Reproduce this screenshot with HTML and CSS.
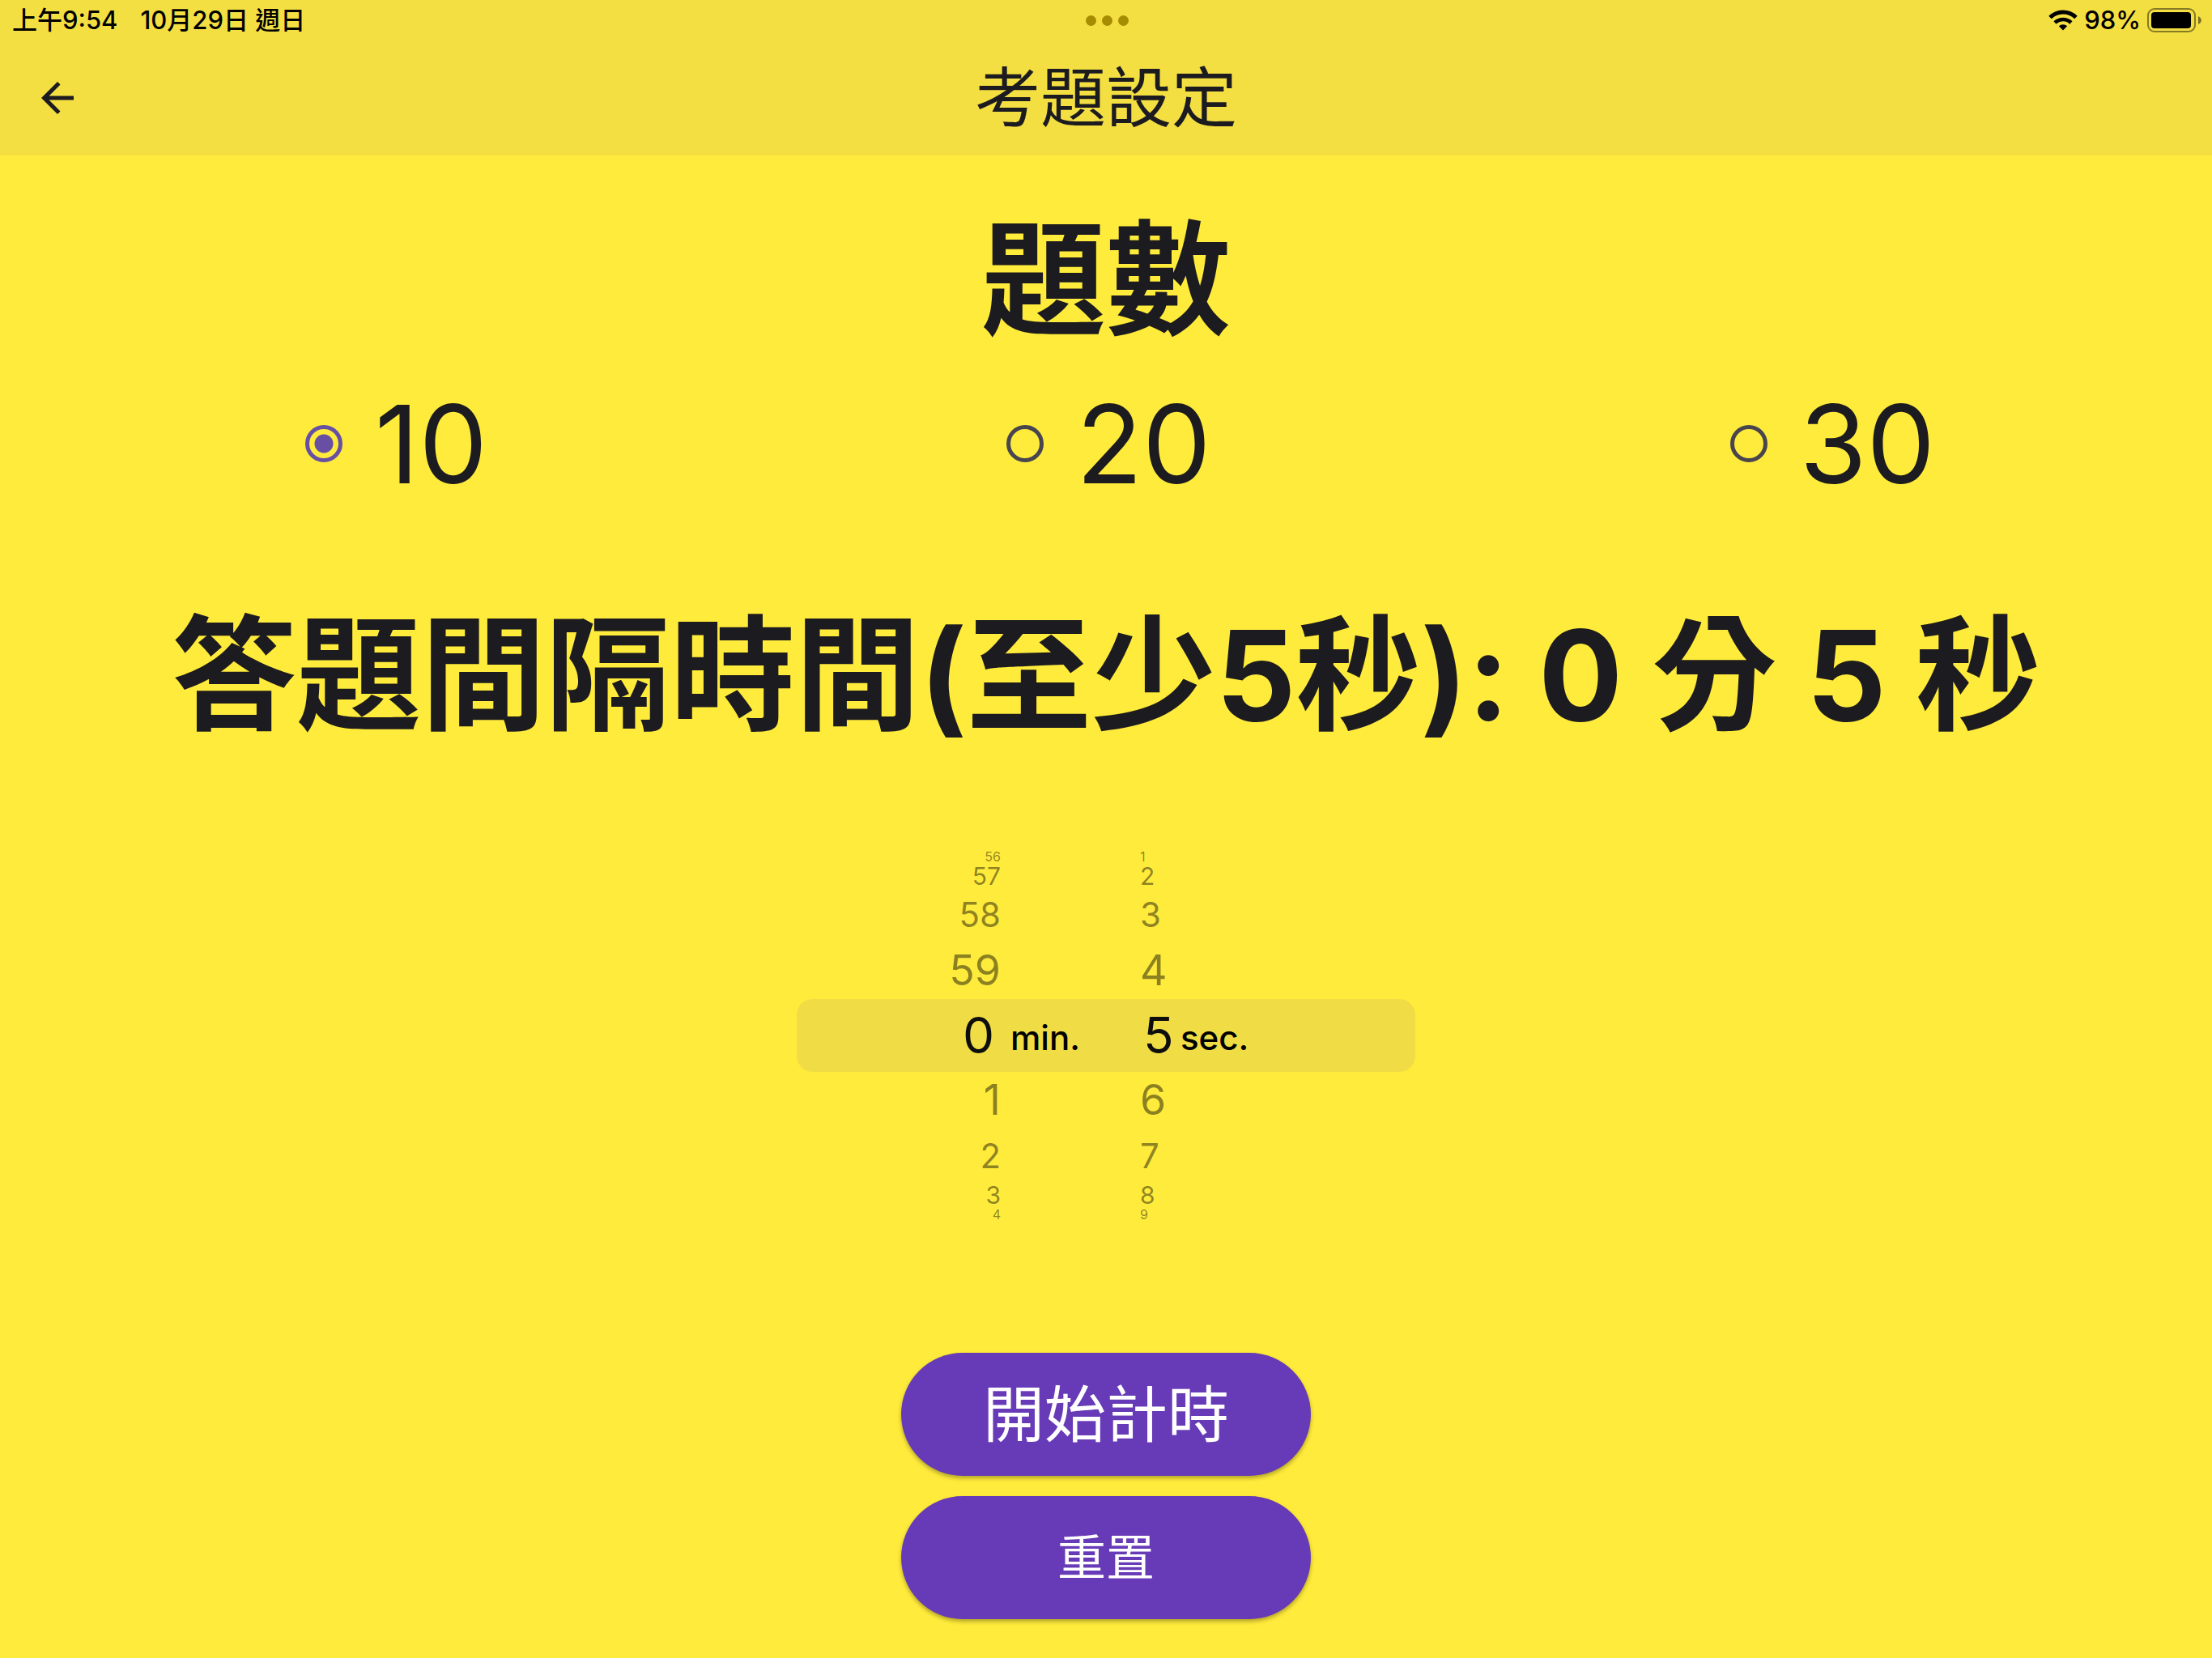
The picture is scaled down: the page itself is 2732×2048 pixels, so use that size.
FILE: index.html
```html
<!DOCTYPE html>
<html lang="zh-Hant">
<head>
  <meta charset="utf-8">
  <meta name="viewport" content="width=device-width, initial-scale=1">
  <title>考題設定</title>
  <link rel="stylesheet" href="styles.css">
</head>
<body>
  <header class="header">
    <div class="status">
      <div class="status-left">
        <span>上午9:54</span>
        <span>10月29日 週日</span>
      </div>
      <div class="dots"><i class="dot"></i><i class="dot"></i><i class="dot"></i></div>
      <div class="status-right">
        <svg class="wifi" viewBox="0 0 36 26" aria-hidden="true">
          <path d="M2 9.5a23 23 0 0 1 32 0" fill="none" stroke="#000" stroke-width="5"/>
          <path d="M8 16a14.5 14.5 0 0 1 20 0" fill="none" stroke="#000" stroke-width="4.6"/>
          <path d="M12.8 20.3a7.6 7.6 0 0 1 10.4 0L18 25.5z"/>
        </svg>
        <span>98%</span>
        <svg class="battery" viewBox="0 0 68 30" aria-hidden="true">
          <rect x="1" y="1" width="58" height="28" rx="8" fill="none" stroke="#000" stroke-opacity=".45" stroke-width="2"/>
          <rect x="5" y="5" width="49" height="20" rx="4"/>
          <path d="M63 10c5 2 5 8 0 10z" fill-opacity=".5"/>
        </svg>
      </div>
    </div>
    <nav class="bar">
      <button class="back" type="button" aria-label="返回">
        <svg class="back-icon" viewBox="0 0 24 24" aria-hidden="true"><path d="M20 11H7.83l5.59-5.59L12 4l-8 8 8 8 1.41-1.41L7.83 13H20z"/></svg>
      </button>
      <h1 class="title">考題設定</h1>
    </nav>
  </header>

  <main class="main">
    <h2 class="heading" id="count-heading">題數</h2>
    <div class="choices" role="radiogroup" aria-labelledby="count-heading">
      <label class="choice"><input class="radio" type="radio" name="count" value="10" checked>10</label>
      <label class="choice"><input class="radio" type="radio" name="count" value="20">20</label>
      <label class="choice"><input class="radio" type="radio" name="count" value="30">30</label>
    </div>

    <h2 class="heading interval">答題間隔時間(至少5秒): 0 分 5 秒</h2>

    <div class="picker">
      <div class="row edge"><span class="minute">56</span><span class="second">1</span></div>
      <div class="row far"><span class="minute">57</span><span class="second">2</span></div>
      <div class="row mid"><span class="minute">58</span><span class="second">3</span></div>
      <div class="row near"><span class="minute">59</span><span class="second">4</span></div>
      <div class="row selected"><span class="minute">0</span><span class="unit">min.</span><span class="second">5</span><span class="unit">sec.</span></div>
      <div class="row near"><span class="minute">1</span><span class="second">6</span></div>
      <div class="row mid"><span class="minute">2</span><span class="second">7</span></div>
      <div class="row far"><span class="minute">3</span><span class="second">8</span></div>
      <div class="row edge"><span class="minute">4</span><span class="second">9</span></div>
    </div>

    <div class="actions">
      <button class="button" type="button">開始計時</button>
      <button class="button small" type="button">重置</button>
    </div>
  </main>
</body>
</html>
```
FILE: styles.css
```css
* {
  box-sizing: border-box;
}

body {
  margin: 0;
  min-height: 100vh;
  background: #ffeb3b;
  color: #1c1b1f;
  font-family: Inter, "Noto Sans CJK TC", sans-serif;
}

.header {
  background: #f4df43;
}

.status {
  display: grid;
  grid-template-columns: 1fr auto 1fr;
  align-items: center;
  height: 50px;
  padding: 0 12px 0 15px;
  color: #000;
  font-size: 31px;
  font-weight: 500;
  line-height: 50px;
}

.status-left {
  display: flex;
  gap: 28px;
}

.dots {
  display: flex;
  gap: 7px;
}

.dot {
  width: 13px;
  height: 13px;
  border-radius: 50%;
  background: #a68c00;
}

.status-right {
  display: flex;
  align-items: center;
  justify-content: flex-end;
  gap: 8px;
}

.wifi {
  width: 36px;
  height: 26px;
}

.battery {
  width: 68px;
  height: 30px;
}

.bar {
  display: grid;
  grid-template-columns: 142px 1fr 142px;
  align-items: center;
  height: 142px;
}

.back {
  display: flex;
  align-items: center;
  justify-content: center;
  height: 142px;
  padding: 0;
  border: 0;
  background: none;
}

.back-icon {
  width: 60px;
  height: 60px;
  fill: #1c1b1f;
}

.title {
  margin: 0;
  font-size: 81px;
  font-weight: 400;
  line-height: 120px;
  text-align: center;
}

.main {
  display: flex;
  flex-direction: column;
  padding: 44px 0 48px;
}

.heading {
  margin: 0;
  font-size: 154px;
  font-weight: 700;
  font-variant-ligatures: no-contextual;
  line-height: 220px;
  text-align: center;
}

.choices {
  display: flex;
  justify-content: space-between;
  padding: 0 342px 0 377px;
}

.choice {
  display: flex;
  align-items: center;
  gap: 40px;
  font-size: 134px;
  line-height: 184px;
}

.radio {
  appearance: none;
  width: 46px;
  height: 46px;
  margin: 0;
  border: 5px solid #49454f;
  border-radius: 50%;
}

.radio:checked {
  border-color: #6750a4;
  background: radial-gradient(circle, #6750a4 11px, transparent 12px);
}

.interval {
  margin-top: 84px;
}

.picker {
  align-self: center;
  width: 764px;
  margin-top: 104px;
}

.row {
  display: grid;
  grid-template-columns: 252px 172px 1fr;
  align-items: center;
  color: rgba(0, 0, 0, 0.45);
}

.minute {
  text-align: right;
}

.second {
  grid-column: 3;
}

.edge {
  font-size: 16px;
  line-height: 20px;
}

.far {
  font-size: 30px;
  line-height: 28px;
}

.mid {
  font-size: 42px;
  line-height: 68px;
}

.near {
  font-size: 52px;
  line-height: 70px;
}

.selected {
  grid-template-columns: 244px 184px 46px 1fr;
  border-radius: 20px;
  background: #f0dc44;
  color: #0d0d0d;
  font-size: 62px;
  line-height: 90px;
}

.unit {
  padding-top: 6px;
  color: #000;
  font-size: 42px;
  font-weight: 500;
  line-height: 84px;
}

.selected .minute + .unit {
  padding-left: 20px;
}

.actions {
  display: flex;
  flex-direction: column;
  align-items: center;
  gap: 25px;
  margin-top: 161px;
}

.button {
  width: 506px;
  height: 152px;
  padding: 0;
  border: 0;
  border-radius: 76px;
  background: #673ab7;
  box-shadow: 0 3px 5px rgba(0, 0, 0, 0.3);
  color: #fff;
  font-family: inherit;
  font-size: 76px;
  line-height: 152px;
}

.small {
  font-size: 60px;
}
```
